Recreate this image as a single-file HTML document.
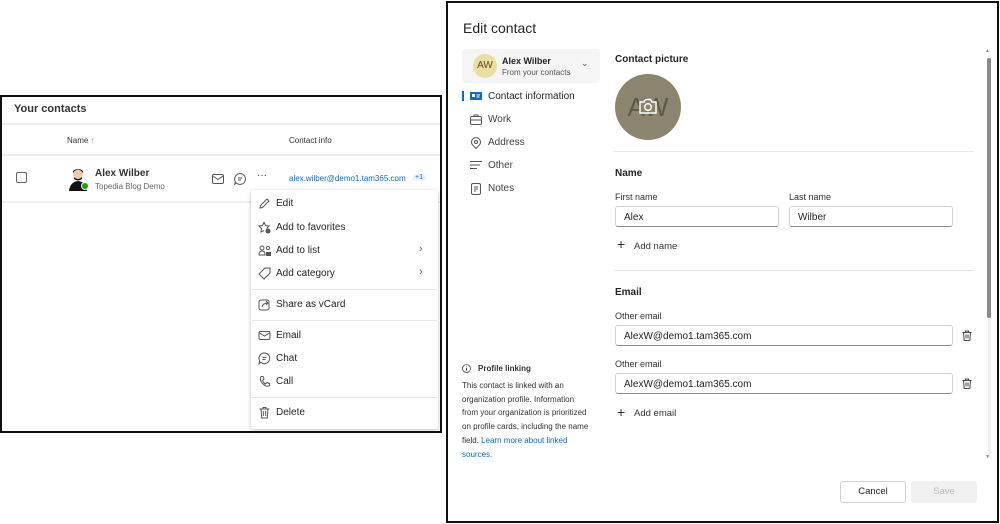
<!DOCTYPE html>
<html><head><meta charset="utf-8"><style>
*{margin:0;padding:0;box-sizing:border-box}
body{width:1000px;height:524px;background:#fff;position:relative;font-family:"Liberation Sans",sans-serif;color:#242424;overflow:hidden}
.a{position:absolute;white-space:nowrap}
.hl{position:absolute;height:1px;background:#e6e6e6}
.mi{position:absolute;left:258px;font-size:10px;color:#242424;white-space:nowrap;width:170px;height:14px}
.mi svg{position:absolute;left:0;top:-1px}
.mi span{position:absolute;left:18px;top:0;white-space:nowrap}
.inp{position:absolute;height:21px;border:1px solid #d1d1d1;border-bottom:1px solid #8a8a8a;border-radius:3px;font-size:10px;padding:5px 8px}
.nav{position:absolute;left:470px;font-size:10px;color:#424242;white-space:nowrap;width:125px;height:14px}
.nav span{position:absolute;left:18px;top:0;white-space:nowrap}
.nav svg{position:absolute;left:0;top:0}
</style></head><body>
<!-- LEFT PANEL -->
<div class="a" style="left:0;top:95px;width:442px;height:338px;border:2px solid #111"></div>
<div class="a" style="left:14px;top:103px;font-size:11px;font-weight:bold;color:#333">Your contacts</div>
<div class="hl" style="left:2px;top:123px;width:438px;height:2px;background:#eee"></div>
<div class="a" style="left:67px;top:136px;font-size:8px;color:#333">Name <span style="color:#888">↑</span></div>
<div class="a" style="left:289px;top:136px;font-size:8px;color:#333">Contact info</div>
<div class="hl" style="left:2px;top:154px;width:438px;height:2px;background:#eee"></div>
<div class="a" style="left:16px;top:172px;width:11px;height:11px;border:1px solid #666;border-radius:2px"></div>
<svg class="a" style="left:68px;top:167px" width="22" height="24" viewBox="0 0 22 24"><circle cx="10" cy="7" r="5" fill="#f0c9a8"/><path d="M5 6 Q10 -1 15 6 L15 4 Q10 0 5 4Z" fill="#111"/><path d="M6 10 Q10 14 14 10 L14 12 Q10 15 6 12Z" fill="#111"/><path d="M1 24 Q2 15 10 14 Q18 15 19 24Z" fill="#111"/><circle cx="17" cy="19" r="3.5" fill="#13a10e" stroke="#fff"/></svg>
<div class="a" style="left:95px;top:168px;font-size:10px;font-weight:bold;color:#333">Alex Wilber</div>
<div class="a" style="left:95px;top:182px;font-size:8px;color:#666">Topedia Blog Demo</div>
<svg class="a" style="left:212px;top:174px" width="12" height="10" viewBox="0 0 12 10"><rect x=".5" y=".5" width="11" height="9" rx="1.5" fill="none" stroke="#555"/><path d="M1 2 L6 5.5 L11 2" fill="none" stroke="#555"/></svg>
<svg class="a" style="left:234px;top:173px" width="12" height="12" viewBox="0 0 12 12"><path d="M6 .6A5.4 5.4 0 1 1 2.2 9.8L.7 11.3 1.3 8.5A5.4 5.4 0 0 1 6 .6Z" fill="none" stroke="#555"/><path d="M4 5h4M4 7h3" stroke="#555"/></svg>
<div class="a" style="left:257px;top:170px;font-size:10px;color:#333">···</div>
<div class="a" style="left:289px;top:174px;font-size:8px;color:#0f6cbd">alex.wilber@demo1.tam365.com</div>
<div class="a" style="left:412px;top:174px;font-size:7px;color:#0f6cbd;background:#ebf3fc;border-radius:6px;padding:0 3px">+1</div>
<div class="hl" style="left:2px;top:201px;width:438px;height:2px;background:#eee"></div>
<!-- menu -->
<div class="a" style="left:251px;top:190px;width:187px;height:239px;background:#fff;box-shadow:0 1px 4px rgba(0,0,0,.25);border-radius:3px"></div>
<div class="mi" style="top:198px"><svg width="13" height="13" viewBox="0 0 13 13"><path d="M2 11 L2.5 8.5 9 2 11 4 4.5 10.5Z" fill="none" stroke="#555"/></svg><span>Edit</span></div>
<div class="mi" style="top:222px"><svg width="14" height="13" viewBox="0 0 14 13"><path d="M6 1 7.5 4.5 11 5 8.5 7.5" fill="none" stroke="#555"/><path d="M6 1 4.5 4.5 1 5 3.5 7.5 3 11 6 9.5" fill="none" stroke="#555"/><circle cx="10" cy="10" r="2.5" fill="#555"/></svg><span>Add to favorites</span></div>
<div class="mi" style="top:245px"><svg width="14" height="13" viewBox="0 0 14 13"><circle cx="4" cy="4" r="2" fill="none" stroke="#555"/><path d="M1 11Q1 7 4 7Q7 7 7 11Z" fill="none" stroke="#555"/><circle cx="10" cy="4" r="1.6" fill="none" stroke="#555"/><rect x="8" y="8" width="5" height="4" fill="#555"/></svg><span>Add to list</span></div>
<div class="a" style="left:419px;top:243px;font-size:11px;color:#666">›</div>
<div class="mi" style="top:268px"><svg width="13" height="13" viewBox="0 0 13 13"><path d="M7 1H12V6L6 12 1 7Z" fill="none" stroke="#555"/></svg><span>Add category</span></div>
<div class="a" style="left:419px;top:266px;font-size:11px;color:#666">›</div>
<div class="hl" style="left:252px;top:289px;width:185px"></div>
<div class="mi" style="top:299px"><svg width="13" height="13" viewBox="0 0 13 13"><rect x="1" y="2" width="10" height="10" rx="2" fill="none" stroke="#555"/><path d="M4 9 Q5 5 10 5 M8 3 10 5 8 7" fill="none" stroke="#555"/></svg><span>Share as vCard</span></div>
<div class="hl" style="left:252px;top:320px;width:185px"></div>
<div class="mi" style="top:330px"><svg width="13" height="13" viewBox="0 0 13 13"><rect x="1" y="2.5" width="11" height="8" rx="1.5" fill="none" stroke="#555"/><path d="M1.5 4 6.5 7 11.5 4" fill="none" stroke="#555"/></svg><span>Email</span></div>
<div class="mi" style="top:353px"><svg width="13" height="13" viewBox="0 0 13 13"><path d="M6.5 1A5.3 5.3 0 1 1 2.8 10.2L1 11.8 1.6 8.8A5.3 5.3 0 0 1 6.5 1Z" fill="none" stroke="#555"/><path d="M4.5 5.5h4M4.5 7.5h3" stroke="#555"/></svg><span>Chat</span></div>
<div class="mi" style="top:376px"><svg width="13" height="13" viewBox="0 0 13 13"><path d="M3 1.5 5 1.5 6 4 4.5 5.5Q5.5 8 7.5 9L9 7.5 11.5 8.5 11.5 10.5Q9 12.5 5 9 1 5 3 1.5Z" fill="none" stroke="#555"/></svg><span>Call</span></div>
<div class="hl" style="left:252px;top:397px;width:185px"></div>
<div class="mi" style="top:407px"><svg width="13" height="13" viewBox="0 0 13 13"><path d="M1.5 3h10M5 3V1.5h3V3M3 3l.7 9h5.6L10 3M5.3 5v5M7.7 5v5" fill="none" stroke="#555"/></svg><span>Delete</span></div>

<!-- RIGHT PANEL -->
<div class="a" style="left:446px;top:1px;width:553px;height:522px;border:2px solid #111"></div>
<div class="a" style="left:463px;top:20px;font-size:14px;color:#242424">Edit contact</div>
<div class="a" style="left:462px;top:49px;width:138px;height:34px;background:#f5f5f5;border-radius:3px"></div>
<div class="a" style="left:473px;top:54px;width:24px;height:24px;border-radius:50%;background:#ecdea1;font-size:10px;color:#5a4f20;text-align:center;line-height:24px">AW</div>
<div class="a" style="left:502px;top:56px;font-size:9px;font-weight:bold">Alex Wilber</div>
<div class="a" style="left:502px;top:68px;font-size:8px;color:#555">From your contacts</div>
<div class="a" style="left:581px;top:58px;font-size:9px;color:#555">⌄</div>
<div class="a" style="left:462px;top:91px;width:2px;height:10px;background:#0f6cbd"></div>
<div class="nav" style="top:91px"><svg width="12" height="10" viewBox="0 0 12 10"><rect x="0" y="1" width="12" height="8" rx="1" fill="#0f6cbd"/><rect x="2" y="3" width="3" height="3" fill="#fff"/><path d="M6.5 4h3.5M6.5 6h3" stroke="#fff"/></svg><span style="color:#242424">Contact information</span></div>
<div class="nav" style="top:114px"><svg width="12" height="11" viewBox="0 0 12 11"><rect x=".5" y="2.5" width="11" height="8" rx="1.5" fill="none" stroke="#555"/><path d="M4 2.5V1h4v1.5M.5 6h11" fill="none" stroke="#555"/></svg><span>Work</span></div>
<div class="nav" style="top:137px"><svg width="12" height="12" viewBox="0 0 12 12"><path d="M6 11.5 2.2 7.5A4.5 4.5 0 1 1 9.8 7.5Z" fill="none" stroke="#555"/><circle cx="6" cy="5" r="1.5" fill="none" stroke="#555"/></svg><span>Address</span></div>
<div class="nav" style="top:160px"><svg width="12" height="10" viewBox="0 0 12 10"><path d="M0 1.5h12M0 5h10M0 8.5h7" stroke="#555"/></svg><span>Other</span></div>
<div class="nav" style="top:183px"><svg width="12" height="12" viewBox="0 0 12 12"><rect x="1.5" y=".5" width="9" height="11" rx="1.5" fill="none" stroke="#555"/><path d="M4 4h4M4 6h4M4 8h2" stroke="#555"/></svg><span>Notes</span></div>

<div class="a" style="left:615px;top:54px;font-size:10px;font-weight:bold">Contact picture</div>
<div class="a" style="left:615px;top:74px;width:66px;height:66px;border-radius:50%;background:#8b8570;font-size:26px;color:#5e5847;text-align:center;line-height:66px">AW</div>
<svg class="a" style="left:638px;top:97px" width="20" height="18" viewBox="0 0 20 18"><path d="M2 5h4l1.5-2.5h5L14 5h4v11H2Z" fill="#8b8570" stroke="#fff" stroke-width="1.4"/><circle cx="10" cy="10" r="3.3" fill="none" stroke="#fff" stroke-width="1.4"/></svg>
<div class="hl" style="left:614px;top:151px;width:360px"></div>
<div class="a" style="left:615px;top:168px;font-size:10px;font-weight:bold">Name</div>
<div class="a" style="left:615px;top:192px;font-size:9px;color:#333">First name</div>
<div class="a" style="left:789px;top:192px;font-size:9px;color:#333">Last name</div>
<div class="inp" style="left:615px;top:206px;width:164px">Alex</div>
<div class="inp" style="left:789px;top:206px;width:164px">Wilber</div>
<div class="a" style="left:617px;top:237px;font-size:14px;color:#333;line-height:14px">+</div>
<div class="a" style="left:634px;top:241px;font-size:9.5px;color:#333">Add name</div>
<div class="hl" style="left:614px;top:270px;width:360px"></div>
<div class="a" style="left:615px;top:287px;font-size:10px;font-weight:bold">Email</div>
<div class="a" style="left:615px;top:311px;font-size:9px;color:#333">Other email</div>
<div class="inp" style="left:615px;top:325px;width:338px">AlexW@demo1.tam365.com</div>
<svg class="a" style="left:962px;top:330px" width="10" height="11" viewBox="0 0 10 11"><path d="M.5 2.5h9M3.5 2.5V1h3v1.5M1.5 2.5l.7 8h5.6l.7-8M4 4.5v4M6 4.5v4" fill="none" stroke="#444"/></svg>
<div class="a" style="left:615px;top:359px;font-size:9px;color:#333">Other email</div>
<div class="inp" style="left:615px;top:373px;width:338px">AlexW@demo1.tam365.com</div>
<svg class="a" style="left:962px;top:378px" width="10" height="11" viewBox="0 0 10 11"><path d="M.5 2.5h9M3.5 2.5V1h3v1.5M1.5 2.5l.7 8h5.6l.7-8M4 4.5v4M6 4.5v4" fill="none" stroke="#444"/></svg>
<div class="a" style="left:617px;top:405px;font-size:14px;color:#333;line-height:14px">+</div>
<div class="a" style="left:634px;top:408px;font-size:9.5px;color:#333">Add email</div>

<svg class="a" style="left:462px;top:364px" width="9" height="9" viewBox="0 0 9 9"><circle cx="4.5" cy="4.5" r="4" fill="none" stroke="#444" stroke-width=".8"/><path d="M4.5 4v2.5M4.5 2.5v.6" stroke="#444"/></svg>
<div class="a" style="left:478px;top:364px;font-size:8px;font-weight:bold;color:#333">Profile linking</div>
<div class="a" style="left:462px;top:379px;font-size:8px;color:#333;line-height:13.7px">This contact is linked with an<br>organization profile. Information<br>from your organization is prioritized<br>on profile cards, including the name<br>field. <span style="color:#0f6cbd">Learn more about linked</span><br><span style="color:#0f6cbd">sources.</span></div>

<div class="a" style="left:988px;top:58px;width:3px;height:400px;background:#f0f0f0"></div>
<div class="a" style="left:987px;top:58px;width:4px;height:260px;background:#8a8a8a;border-radius:2px"></div>
<div class="a" style="left:985px;top:48px;font-size:5px;color:#888">▲</div>
<div class="a" style="left:985px;top:454px;font-size:5px;color:#888">▼</div>
<div class="a" style="left:840px;top:481px;width:66px;height:22px;border:1px solid #d1d1d1;border-radius:3px;font-size:9.5px;text-align:center;line-height:20px">Cancel</div>
<div class="a" style="left:911px;top:481px;width:66px;height:22px;background:#f0f0f0;border-radius:3px;font-size:9.5px;color:#bdbdbd;text-align:center;line-height:22px">Save</div>
</body></html>
